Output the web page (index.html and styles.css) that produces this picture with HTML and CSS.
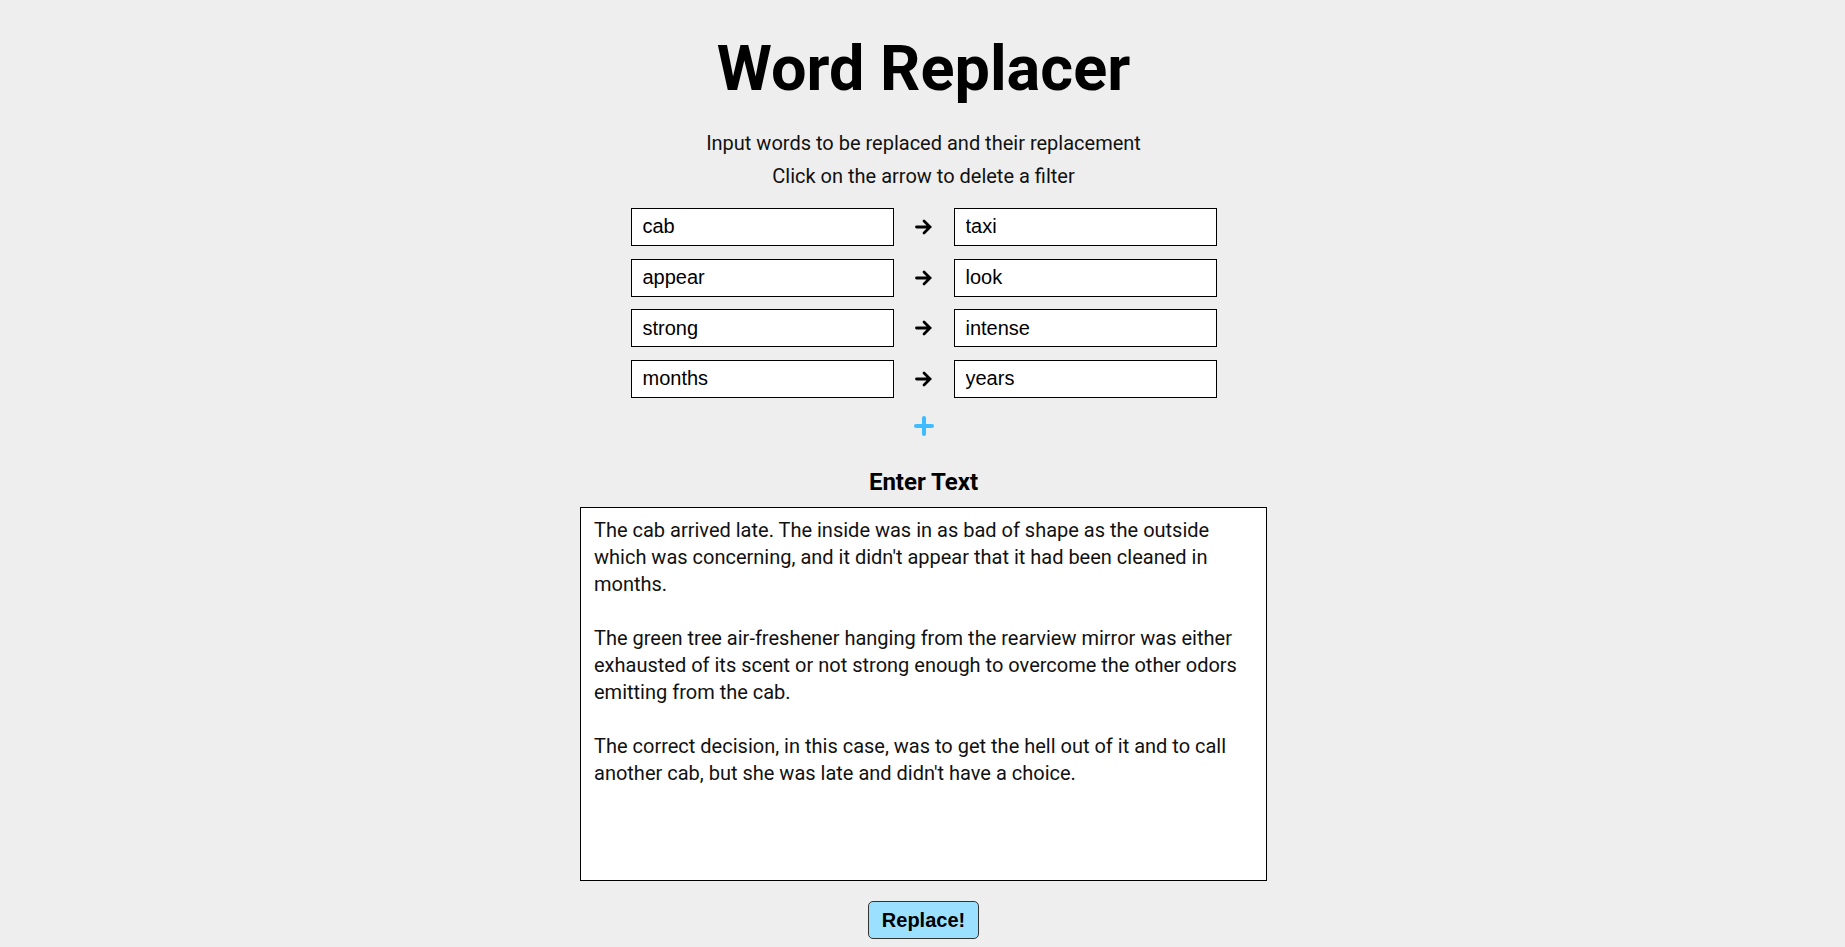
FILE: index.html
```html
<!DOCTYPE html>
<html lang="en">
<head>
<meta charset="utf-8">
<title>Word Replacer</title>
<link rel="stylesheet" href="styles.css">
</head>
<body>
<main class="app">
  <h1 class="title">Word Replacer</h1>
  <div class="hints">
    <p>Input words to be replaced and their replacement</p>
    <p>Click on the arrow to delete a filter</p>
  </div>
  <div class="filters">
    <div class="filter-row">
      <input class="word" type="text" value="cab">
      <button class="arrow" type="button" aria-label="Delete filter"><svg viewBox="0 0 18 16" width="18" height="16"><path d="M1.5 8 H15 M9 2 L15 8 L9 14" fill="none" stroke="#000" stroke-width="2.8" stroke-linecap="round" stroke-linejoin="miter"/></svg></button>
      <input class="word" type="text" value="taxi">
    </div>
    <div class="filter-row">
      <input class="word" type="text" value="appear">
      <button class="arrow" type="button" aria-label="Delete filter"><svg viewBox="0 0 18 16" width="18" height="16"><path d="M1.5 8 H15 M9 2 L15 8 L9 14" fill="none" stroke="#000" stroke-width="2.8" stroke-linecap="round" stroke-linejoin="miter"/></svg></button>
      <input class="word" type="text" value="look">
    </div>
    <div class="filter-row">
      <input class="word" type="text" value="strong">
      <button class="arrow" type="button" aria-label="Delete filter"><svg viewBox="0 0 18 16" width="18" height="16"><path d="M1.5 8 H15 M9 2 L15 8 L9 14" fill="none" stroke="#000" stroke-width="2.8" stroke-linecap="round" stroke-linejoin="miter"/></svg></button>
      <input class="word" type="text" value="intense">
    </div>
    <div class="filter-row">
      <input class="word" type="text" value="months">
      <button class="arrow" type="button" aria-label="Delete filter"><svg viewBox="0 0 18 16" width="18" height="16"><path d="M1.5 8 H15 M9 2 L15 8 L9 14" fill="none" stroke="#000" stroke-width="2.8" stroke-linecap="round" stroke-linejoin="miter"/></svg></button>
      <input class="word" type="text" value="years">
    </div>
  </div>
  <button class="add" type="button" aria-label="Add filter"><svg viewBox="0 0 20 20" width="20" height="20"><path d="M10 2 V18 M2 10 H18" fill="none" stroke="#3dbcff" stroke-width="4" stroke-linecap="round"/></svg></button>
  <h2 class="section">Enter Text</h2>
  <textarea class="text-input" spellcheck="false">The cab arrived late. The inside was in as bad of shape as the outside which was concerning, and it didn't appear that it had been cleaned in months.

The green tree air-freshener hanging from the rearview mirror was either exhausted of its scent or not strong enough to overcome the other odors emitting from the cab.

The correct decision, in this case, was to get the hell out of it and to call another cab, but she was late and didn't have a choice.</textarea>
  <button class="replace" type="button">Replace!</button>
</main>
</body>
</html>
```
FILE: styles.css
```css
html, body {
  margin: 0;
  padding: 0;
  background: #eeeeee;
}

body {
  font-family: Roboto, "Noto Sans", sans-serif;
  color: #000;
}

.app {
  display: flex;
  flex-direction: column;
  align-items: center;
  padding-top: 37px;
  padding-left: 2px;
}

.title {
  margin: 0;
  font-size: 63px;
  line-height: 64px;
  font-weight: 700;
}

.hints {
  margin-top: 26.2px;
  text-align: center;
}

.hints p {
  margin: 0;
  font-size: 20px;
  line-height: 33px;
  color: #111;
}

.filters {
  margin-top: 14.8px;
  display: flex;
  flex-direction: column;
  gap: 12.67px;
}

.filter-row {
  display: flex;
  align-items: center;
  gap: 20px;
}

.word {
  box-sizing: border-box;
  width: 263px;
  height: 38px;
  margin: 0;
  padding: 0 10px 0 11px;
  border: 1px solid #000;
  border-radius: 0;
  background: #fff;
  font-family: "Liberation Sans", Arial, sans-serif;
  font-size: 20px;
  color: #000;
  outline: none;
}

.arrow {
  width: 20px;
  height: 38px;
  padding: 0;
  margin: 0;
  border: 0;
  background: none;
  display: flex;
  align-items: center;
  justify-content: center;
  cursor: pointer;
}

.add {
  margin-top: 18.3px;
  width: 20px;
  height: 20px;
  padding: 0;
  border: 0;
  background: none;
  display: block;
  cursor: pointer;
}

.add svg, .arrow svg {
  display: block;
}

.section {
  margin: 31.3px 0 0;
  font-size: 24px;
  line-height: 28px;
  font-weight: 700;
}

.text-input {
  box-sizing: border-box;
  margin-top: 11.7px;
  width: 687px;
  height: 374px;
  padding: 9px 13px;
  border: 1px solid #000;
  border-radius: 0;
  background: #fff;
  font-family: Roboto, "Noto Sans", sans-serif;
  font-size: 20px;
  line-height: 27px;
  color: #111;
  resize: none;
  outline: none;
}

.replace {
  box-sizing: border-box;
  margin-top: 20px;
  width: 111px;
  height: 38px;
  padding: 0;
  border: 1px solid #333;
  border-radius: 5px;
  background: #9be0ff;
  font-family: "Liberation Sans", Arial, sans-serif;
  font-size: 20px;
  font-weight: 700;
  color: #000;
  cursor: pointer;
}
```
